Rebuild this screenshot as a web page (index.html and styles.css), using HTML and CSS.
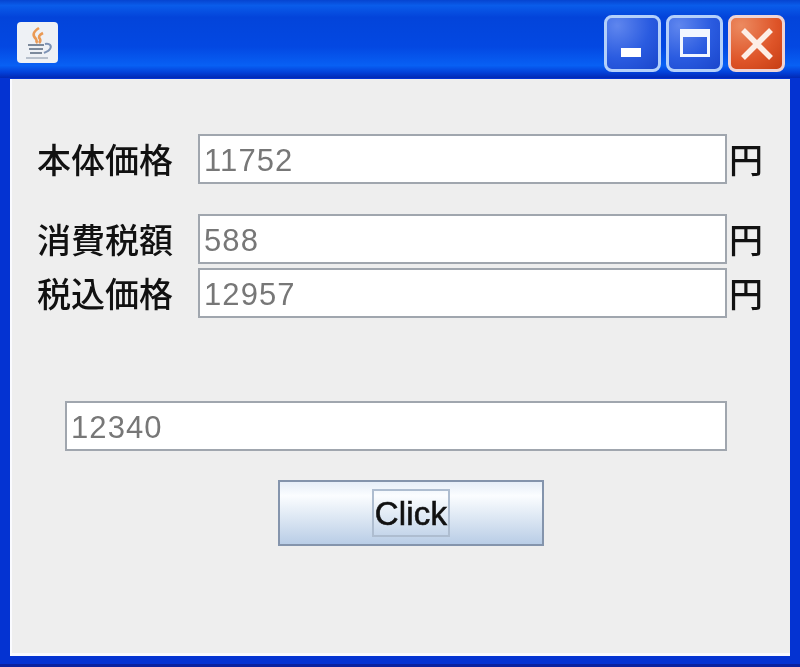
FILE: index.html

```html
<!DOCTYPE html>
<html lang="ja">
<head>
  <meta charset="UTF-8">
  <meta name="viewport" content="width=device-width, initial-scale=1.0">
  <title>Price</title>
  <link rel="stylesheet" href="styles.css">
</head>
<body>
  <div class="window">
    <div class="titlebar">
      <div class="app-icon">
        <svg width="40" height="40" viewBox="0 0 40 40" fill="none">
          <path d="M21 5c-6 4-7 7-3 11 1 2 1 3 0 4M25 10c-4 2-5 4-3 6 1 2 0 3-1 4" stroke="#ea9a55" stroke-width="2.6"/>
          <path d="M10 22h16M11 26h14M12 30h12" stroke="#7c8a9c" stroke-width="1.8"/>
          <path d="M27 21c5-1 7 2 5 5-1 2-4 3-6 4" stroke="#7d93b5" stroke-width="2"/>
          <path d="M8 35h22" stroke="#a9b4c2" stroke-width="1.6"/>
        </svg>
      </div>
      <div class="controls">
        <button class="ctl">
          <svg width="32" height="32" viewBox="0 0 32 32"><rect x="4" y="20" width="20" height="9" fill="#fff"/></svg>
        </button>
        <button class="ctl">
          <svg width="34" height="34" viewBox="0 0 34 34"><path fill-rule="evenodd" fill="#f2f7ff" d="M2 2h30v28H2zM5 10v17h24V10z"/></svg>
        </button>
        <button class="ctl ctl-close">
          <svg width="34" height="34" viewBox="0 0 34 34"><path d="M3 3l28 28M31 3L3 31" stroke="#fdeee6" stroke-width="5.5"/></svg>
        </button>
      </div>
    </div>

    <div class="content">
      <div class="row row-first">
        <label class="label">本体価格</label>
        <input class="field" value="11752">
        <span class="unit">円</span>
      </div>
      <div class="row row-second">
        <label class="label">消費税額</label>
        <input class="field" value="588">
        <span class="unit">円</span>
      </div>
      <div class="row row-third">
        <label class="label">税込価格</label>
        <input class="field" value="12957">
        <span class="unit">円</span>
      </div>
      <div class="row-input">
        <input class="field field-wide" value="12340">
      </div>
      <div class="row-button">
        <button class="click-button"><span class="focus">Click</span></button>
      </div>
    </div>
  </div>
</body>
</html>
```

FILE: styles.css

```css
html, body {
  margin: 0;
  padding: 0;
  height: 100%;
  background: #dfe6f2;
  overflow: hidden;
}
.window {
  height: 667px;
  box-sizing: border-box;
  display: flex;
  flex-direction: column;
  background: #0433d2;
  border-radius: 10px 10px 0 0;
  padding: 0 8px 8px 8px;
  border-bottom: 3px solid #0a22a0;
  font-family: "Noto Sans CJK JP", "Liberation Sans", sans-serif;
  filter: blur(.5px);
}
.titlebar {
  height: 78px;
  margin: 0 -8px;
  padding: 0 15px 0 17px;
  display: flex;
  align-items: center;
  justify-content: space-between;
  background: linear-gradient(#0644d0 0, #0a5cea 7%, #0344da 22%, #0348e2 60%, #0860f4 84%, #0340d8 93%, #0228b4 100%);
}
.app-icon {
  width: 41px;
  height: 41px;
  margin-top: 7px;
  background: #eef1f5;
  border-radius: 4px;
  display: flex;
  align-items: center;
  justify-content: center;
}
.controls {
  display: flex;
  gap: 5px;
  margin-top: 9px;
}
.ctl {
  width: 57px;
  height: 57px;
  padding: 0;
  border: 3px solid #b4d0fa;
  border-radius: 8px;
  background: radial-gradient(circle at 20% 15%, #5f86ee, #2a5be0 55%, #1a46cc);
  display: flex;
  align-items: center;
  justify-content: center;
}
.ctl-close {
  border-color: #f0d4d4;
  background: radial-gradient(circle at 20% 15%, #ec8a60, #de5428 60%, #c63d14);
}
.content {
  flex: 1;
  margin: 1px 2px 0 2px;
  background: #eeeeee;
  box-shadow: inset 2px 0 0 #fafbff, inset 0 -3px 0 #f8f9ff;
  display: flex;
  flex-direction: column;
}
.row {
  display: flex;
  align-items: center;
  height: 50px;
}
.row-first { margin-top: 55px; }
.row-second { margin-top: 30px; }
.row-third { margin-top: 4px; }
.label {
  width: 161px;
  margin-left: 27px;
  font-size: 34px;
  line-height: 50px;
  font-weight: 500;
  color: #111;
  white-space: nowrap;
}
.field {
  width: 529px;
  height: 50px;
  box-sizing: border-box;
  margin: 0;
  padding: 4px 0 0 4px;
  background: #fff;
  border: 2px solid #a0a6ae;
  border-radius: 0;
  outline: none;
  font-family: "Liberation Sans", sans-serif;
  font-size: 31px;
  letter-spacing: 1.1px;
  color: #777;
}
.unit {
  margin-left: 2px;
  font-size: 34px;
  line-height: 50px;
  font-weight: 500;
  color: #111;
}
.row-input {
  margin-top: 83px;
  padding-left: 55px;
}
.field-wide {
  display: block;
  width: 662px;
}
.row-button {
  margin-top: 29px;
  padding-left: 268px;
}
.click-button {
  width: 266px;
  height: 66px;
  padding: 0;
  border: 2px solid #8494ac;
  background: linear-gradient(#e6eef8 0, #fbfdff 22%, #dfe9f4 55%, #b9cde6 100%);
  display: flex;
  align-items: center;
  justify-content: center;
}
.focus {
  border: 2px solid #aebdd0;
  padding: 0 1px;
  height: 44px;
  line-height: 46px;
  font-family: "Liberation Sans", sans-serif;
  font-size: 33px;
  letter-spacing: .2px;
  -webkit-text-stroke: .6px #111;
  color: #111;
}
```
